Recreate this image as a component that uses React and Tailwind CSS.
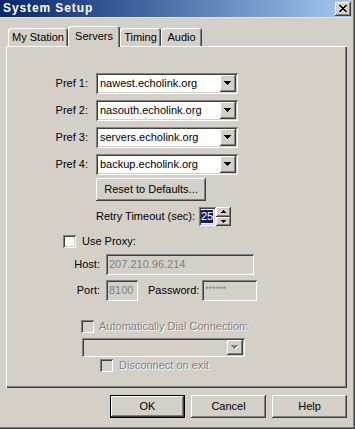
const RAISED = "shadow-[inset_-1px_-1px_#404040,inset_1px_1px_#ffffff,inset_-2px_-2px_#808080,inset_2px_2px_#d4d0c8]";
const SUNKEN = "shadow-[inset_1px_1px_#808080,inset_-1px_-1px_#ffffff,inset_2px_2px_#404040,inset_-2px_-2px_#d4d0c8]";
const DISABLED = "text-[#808080] [text-shadow:1px_1px_0_#ffffff]";

function DownArrow({ disabled }) {
  return (
    <svg width="8" height="5" viewBox="0 0 8 5" shapeRendering="crispEdges">
      {disabled && <polygon points="1,1 8,1 4.5,5" fill="#ffffff" />}
      <polygon points="0,0 7,0 3.5,4" fill={disabled ? "#808080" : "#000000"} />
    </svg>
  );
}

function SpinArrow({ up }) {
  return (
    <svg width="5" height="3" viewBox="0 0 5 3" shapeRendering="crispEdges">
      {up ? (
        <g fill="#000"><rect x="2" y="0" width="1" height="1" /><rect x="1" y="1" width="3" height="1" /><rect x="0" y="2" width="5" height="1" /></g>
      ) : (
        <g fill="#000"><rect x="0" y="0" width="5" height="1" /><rect x="1" y="1" width="3" height="1" /><rect x="2" y="2" width="1" height="1" /></g>
      )}
    </svg>
  );
}

function CloseGlyph() {
  const rows = ["11000011", "01100110", "00111100", "00011000", "00111100", "01100110", "11000011"];
  return (
    <svg width="8" height="7" viewBox="0 0 8 7" shapeRendering="crispEdges">
      {rows.map((r, y) => r.split("").map((c, x) => c === "1" && <rect key={`${x}-${y}`} x={x} y={y} width="1" height="1" fill="#000" />))}
    </svg>
  );
}

function Combo({ value, width = "w-[142px]", disabled = false, height = "h-[21px]" }) {
  return (
    <div className={`${width} ${height} ${disabled ? "bg-[#d4d0c8]" : "bg-white"} ${SUNKEN} flex items-center p-[2px]`}>
      <div className="flex-1 pl-[2px] whitespace-nowrap overflow-hidden">{value}</div>
      <div className={`w-[16px] h-full bg-[#d4d0c8] ${RAISED} flex items-center justify-center`}>
        <DownArrow disabled={disabled} />
      </div>
    </div>
  );
}

function Checkbox({ disabled }) {
  return <div className={`w-[13px] h-[13px] shrink-0 ${disabled ? "bg-[#d4d0c8]" : "bg-white"} ${SUNKEN}`} />;
}

function Button({ children, isDefault, className = "" }) {
  const bevel = isDefault
    ? "shadow-[inset_0_0_0_1px_#000000,inset_-2px_-2px_#404040,inset_2px_2px_#ffffff,inset_-3px_-3px_#808080]"
    : RAISED;
  return (
    <div className={`h-[23px] bg-[#d4d0c8] ${bevel} flex items-center justify-center ${className}`}>{children}</div>
  );
}

function Tab({ label, selected, width }) {
  if (selected) {
    return (
      <div className={`${width} h-[21px] mb-[-1px] relative z-10 bg-[#d4d0c8] rounded-t-[3px] shadow-[inset_1px_1px_#ffffff,inset_-1px_0_#404040,inset_-2px_0_#808080] flex items-start justify-center pt-[4px]`}>
        {label}
      </div>
    );
  }
  return (
    <div className={`${width} h-[18px] bg-[#d4d0c8] rounded-t-[3px] shadow-[inset_1px_1px_#ffffff,inset_-1px_0_#404040,inset_-2px_0_#808080] flex items-start justify-center pt-[3px]`}>
      {label}
    </div>
  );
}

const PREFS = ["nawest.echolink.org", "nasouth.echolink.org", "servers.echolink.org", "backup.echolink.org"];

export default function App() {
  return (
    <div className="w-[355px] h-[429px] bg-[#d4d0c8] overflow-hidden flex flex-col pr-[3px] shadow-[inset_-1px_-1px_#404040,inset_-2px_-2px_#808080] font-['Liberation_Sans',Arial,sans-serif] text-[11px] text-black leading-[13px]">
      <div className="h-[18px] shrink-0 flex items-center justify-between pl-[3px] pr-[1px] bg-linear-to-r from-[#0a246a] to-[#a6caf0] border-b border-[#e8e6e0]">
        <span className="text-white font-bold text-[12px] tracking-[0.9px]">System Setup</span>
        <div className={`w-[16px] h-[14px] bg-[#d4d0c8] ${RAISED} flex items-center justify-center`}>
          <CloseGlyph />
        </div>
      </div>

      <div className="mt-[8px] h-[20px] flex items-end pl-[8px]">
        <Tab label="My Station" width="w-[60px]" />
        <Tab label="Servers" width="w-[52px]" selected />
        <Tab label="Timing" width="w-[41px]" />
        <Tab label="Audio" width="w-[41px]" />
      </div>

      <div className="ml-[6px] w-[341px] h-[342px] shrink-0 shadow-[inset_1px_1px_#ffffff,inset_-1px_-1px_#404040,inset_-2px_-2px_#808080] pt-[27px] flex flex-col">
        <div className="flex flex-col gap-[6px]">
          {PREFS.map((p, i) => (
            <div key={p} className="flex items-center">
              <div className="w-[84px] pr-[2px] text-right">Pref {i + 1}:</div>
              <div className="ml-[6px]"><Combo value={p} /></div>
            </div>
          ))}
        </div>

        <Button className="mt-[3px] ml-[90px] w-[110px] h-[22px]">Reset to Defaults...</Button>

        <div className="mt-[6px] flex items-center h-[19px]">
          <div className="w-[189px] text-right">Retry Timeout (sec):</div>
          <div className="ml-[4px] flex h-[19px]">
            <div className={`w-[17px] h-full bg-white ${SUNKEN} flex items-center pl-[2px]`}>
              <span className="bg-[#0a246a] text-white">25</span>
            </div>
            <div className="w-[15px] h-full flex flex-col">
              <div className={`flex-1 bg-[#d4d0c8] ${RAISED} flex items-center justify-center`}><SpinArrow up /></div>
              <div className={`flex-1 bg-[#d4d0c8] ${RAISED} flex items-center justify-center`}><SpinArrow /></div>
            </div>
          </div>
        </div>

        <div className="mt-[9px] ml-[57px] flex items-center h-[13px]">
          <Checkbox />
          <span className="ml-[6px]">Use Proxy:</span>
        </div>

        <div className="mt-[6px] flex items-center h-[21px]">
          <div className="w-[96px] pr-[2px] text-right">Host:</div>
          <div className={`ml-[4px] w-[148px] h-[21px] ${SUNKEN} flex items-center pl-[3px] text-[#808080]`}>207.210.96.214</div>
        </div>

        <div className="mt-[5px] flex items-center h-[21px]">
          <div className="w-[96px] pr-[2px] text-right">Port:</div>
          <div className={`ml-[4px] w-[32px] h-[21px] ${SUNKEN} flex items-center pl-[3px] text-[#808080]`}>8100</div>
          <span className="ml-[10px]">Password:</span>
          <div className={`ml-[3px] w-[55px] h-[21px] ${SUNKEN} flex items-start pt-[3px] pl-[3px] text-[#808080] text-[9px]`}>******</div>
        </div>

        <div className="mt-[19px] ml-[75px] flex items-center h-[13px]">
          <Checkbox disabled />
          <span className={`ml-[5px] ${DISABLED}`}>Automatically Dial Connection:</span>
        </div>

        <div className="mt-[5px] ml-[76px]">
          <Combo value="" width="w-[163px]" height="h-[19px]" disabled />
        </div>

        <div className="mt-[2px] ml-[94px] flex items-center h-[13px]">
          <Checkbox disabled />
          <span className={`ml-[6px] ${DISABLED}`}>Disconnect on exit</span>
        </div>
      </div>

      <div className="mt-[7px] flex pl-[110px] gap-[6px]">
        <Button isDefault className="w-[75px]">OK</Button>
        <Button className="w-[75px]">Cancel</Button>
        <Button className="w-[75px]">Help</Button>
      </div>
    </div>
  );
}
